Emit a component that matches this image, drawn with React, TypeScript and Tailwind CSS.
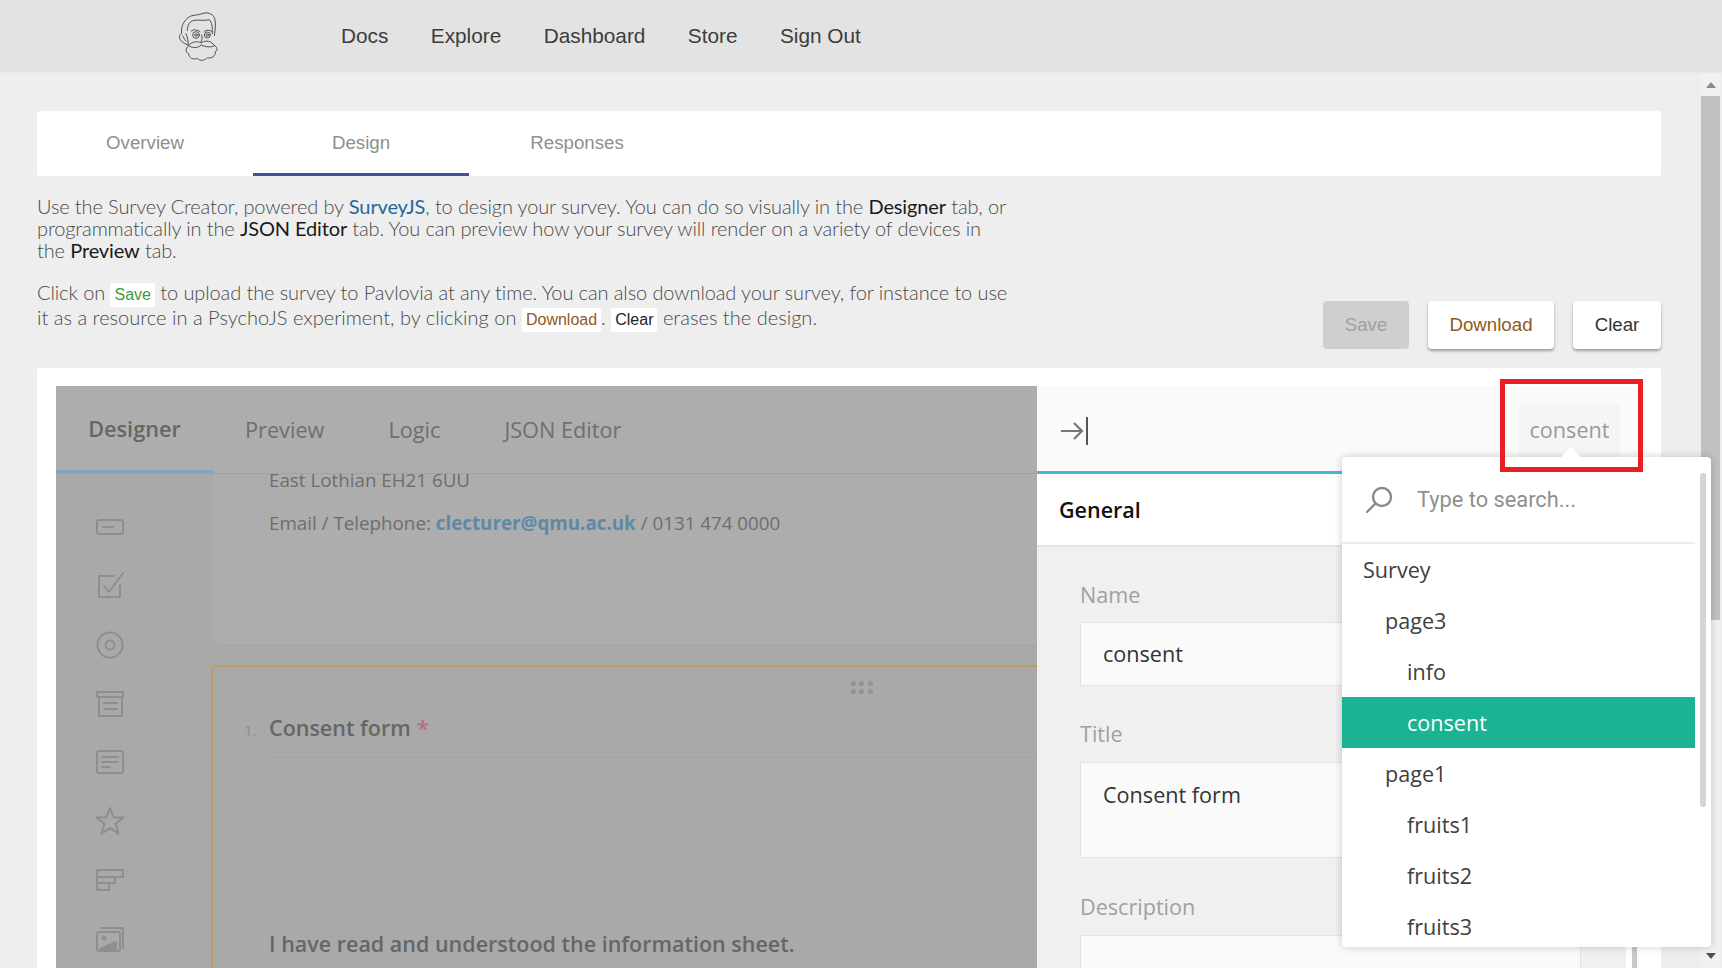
import React from "react";

const openSans = "font-['Open_Sans',sans-serif]";

function Logo() {
  return (
    <svg width="80" height="70" viewBox="0 0 240 210" fill="none" stroke="#444444" strokeWidth="2.800" strokeLinecap="round" strokeLinejoin="round" className="shrink-0">
      <path d="M65 96C62 78 70 62 84 50C96 40 112 44 126 38C142 32 158 38 164 52C168 66 166 84 163 104" />
      <path d="M82 88C82 72 90 60 102 58C116 56 134 60 148 56C156 64 158 80 157 98" />
      <path d="M65 96C58 100 56 110 62 118C68 126 76 128 84 132C86 122 82 108 78 98" />
      <path d="M68 104C72 108 72 116 78 120" />
      <circle cx="108" cy="102" r="10" />
      <circle cx="108" cy="102" r="3.500" />
      <circle cx="142" cy="102" r="9" />
      <circle cx="142" cy="102" r="3.500" />
      <path d="M94 90C102 84 112 86 120 92M132 92C140 86 148 86 156 92" />
      <path d="M125 102C128 112 126 118 122 124" />
      <path d="M85 134C92 124 110 118 124 126C136 116 154 120 164 134C150 140 136 138 124 132C112 142 98 142 85 134Z" />
      <path d="M84 136C76 142 76 154 86 158C86 170 100 178 112 172C120 182 136 178 142 170C154 174 168 164 166 152C174 148 172 138 164 134" />
    </svg>
  );
}

function Icon({ children }: { children: React.ReactNode }) {
  return (
    <div className="h-[59.3px] flex items-center justify-center">
      <svg width="30" height="30" viewBox="0 0 30 30" fill="none" stroke="#8e8e8e" strokeWidth="2" strokeLinecap="round" strokeLinejoin="round">
        {children}
      </svg>
    </div>
  );
}

function NavItem({ label }: { label: string }) {
  return <a className="text-[20.8px] text-[#3c3c3c]">{label}</a>;
}

function Chip({ label, color }: { label: string; color: string }) {
  return (
    <span className={`inline-block bg-white rounded-[2px] px-[4px] h-[24px] my-[-2px] leading-[24px] text-[16px] tracking-normal font-['Liberation_Sans',sans-serif] font-normal align-middle ${color}`}>
      {label}
    </span>
  );
}

const tree = [
  { label: "Survey", indent: "pl-[21px]" },
  { label: "page3", indent: "pl-[43px]" },
  { label: "info", indent: "pl-[65px]" },
  { label: "consent", indent: "pl-[65px]", active: true },
  { label: "page1", indent: "pl-[43px]" },
  { label: "fruits1", indent: "pl-[65px]" },
  { label: "fruits2", indent: "pl-[65px]" },
  { label: "fruits3", indent: "pl-[65px]" },
];

export default function App() {
  return (
    <div className="relative h-screen overflow-hidden bg-[#eeeeee] flex flex-col font-['Liberation_Sans',sans-serif]">
      <header className="h-[73px] shrink-0 bg-[#e3e3e3] border-b border-[#e9e9e9] flex items-center pl-[160px]">
        <Logo />
        <nav className="ml-[101px] flex gap-[42.4px]">
          <NavItem label="Docs" />
          <NavItem label="Explore" />
          <NavItem label="Dashboard" />
          <NavItem label="Store" />
          <NavItem label="Sign Out" />
        </nav>
      </header>

      <div className="flex-1 min-h-0 flex">
        <main className="flex-1 min-w-0 pl-[37px] pr-[40px] pt-[38px] flex flex-col overflow-hidden">
          <div className="h-[65px] shrink-0 bg-white rounded-[3px] flex">
            {["Overview", "Design", "Responses"].map((t, i) => (
              <div
                key={t}
                className={`w-[216px] pt-[3px] flex items-center justify-center text-[18.7px] text-[#8f8f8f] border-b-[3px] ${i === 1 ? "border-[#3f51a2]" : "border-transparent"}`}
              >
                {t}
              </div>
            ))}
          </div>

          <div className="shrink-0 flex items-end justify-between mt-[19px] mb-[19px]">
            <div className="font-['Lato',sans-serif] font-light text-[20px] text-[#4a4a4a] tracking-[-0.13px] pb-[19px]">
              <p className="leading-[22px]">
                Use the Survey Creator, powered by <span className="text-[#23689b] font-normal">SurveyJS</span>, to design your survey. You can do so visually in the <span className="text-[#1a1a1a] font-normal">Designer</span> tab, or
                <br />
                programmatically in the <span className="text-[#1a1a1a] font-normal">JSON Editor</span> tab. You can preview how your survey will render on a variety of devices in
                <br />
                the <span className="text-[#1a1a1a] font-normal">Preview</span> tab.
              </p>
              <p className="leading-[24px] mt-[19px]">
                <span className="tracking-[-0.1px]">Click on <Chip label="Save" color="text-[#3c9a3c]" /> to upload the survey to Pavlovia at any time. You can also download your survey, for instance to use</span>
                <br />
                <span className="tracking-[0.02px]">it as a resource in a PsychoJS experiment, by clicking on <Chip label="Download" color="text-[#8f5a1e]" />. <Chip label="Clear" color="text-[#222222]" /> erases the design.</span>
              </p>
            </div>
            <div className="flex gap-[19px] text-[18.7px]">
              <button className="w-[86px] h-[48px] rounded-[4px] bg-[#cfcfcf] text-[#a1a1a1]">Save</button>
              <button className="w-[126px] h-[48px] rounded-[4px] bg-white text-[#8f5a1e] shadow-[0_2px_3px_rgba(0,0,0,0.35)]">Download</button>
              <button className="w-[88px] h-[48px] rounded-[4px] bg-white text-[#333333] shadow-[0_2px_3px_rgba(0,0,0,0.35)]">Clear</button>
            </div>
          </div>

          <section className={`flex-1 min-h-0 bg-white rounded-t-[3px] pt-[18px] pl-[19px] pr-[18px] flex overflow-hidden ${openSans}`}>
            <div className="w-[981px] shrink-0 bg-[#a9a9a9] flex flex-col overflow-hidden">
              <div className="h-[88px] shrink-0 pt-[2px] bg-[#adadad] border-b border-[#a2a2a2] flex items-center relative z-10 text-[21.7px] text-[#6f6f6f]">
                <div className="w-[157px] h-[calc(100%+2px)] mt-[-2px] pt-[2px] flex items-center justify-center font-semibold text-[#666666] border-b-[3px] border-[#7fa5b8]">Designer</div>
                <span className="ml-[32px]">Preview</span>
                <span className="ml-[64px]">Logic</span>
                <span className="ml-[64px]">JSON Editor</span>
              </div>
              <div className="flex-1 min-h-0 flex">
                <div className="w-[155px] shrink-0 pt-[24px] pr-[47px] flex flex-col">
                  <Icon><rect x="2" y="8" width="26" height="14" rx="2" /><path d="M8 15h10" /></Icon>
                  <Icon><path d="M25 14v12H4V5h15" /><path d="M9 15l5 6L28 2" /></Icon>
                  <Icon><circle cx="15" cy="15" r="12.500" /><circle cx="15" cy="15" r="4.500" /></Icon>
                  <Icon><path d="M2 3h26v5H2zM4 8v19h23V8" /><path d="M9 14h13M9 20h13" /></Icon>
                  <Icon><rect x="2" y="4" width="26" height="22" rx="2" /><path d="M7 10h16M7 15h16M7 20h8" /></Icon>
                  <Icon><path d="M15 2l3.600 9.400H28.600l-8 6.400 3 10L15 22l-8.600 5.800 3-10-8-6.400h10z" /></Icon>
                  <Icon><path d="M2 5h26v7H2zM2 12h18v6H2zM2 18h12v7H2z" /></Icon>
                  <Icon><path d="M6 4h22v20" /><rect x="2" y="8" width="23" height="19" rx="2" /><circle cx="9" cy="14" r="1.500" /><path d="M5 25l16-7v7z" fill="#8e8e8e" /></Icon>
                </div>
                <div className="flex-1 min-w-0 overflow-hidden">
                  <div className="h-[171px] ml-[2px] mr-[-8px] bg-[#adadad] rounded-b-[6px] border-b border-[#a4a4a4] pl-[56px] text-[18.8px] text-[#6e6e6e] flex flex-col overflow-hidden">
                    <p className="leading-[14px] mt-[-1px]">East Lothian EH21 6UU</p>
                    <p className="leading-[25px] mt-[24px]">
                      Email / Telephone: <span className="font-bold text-[#5c8aa6]">clecturer@qmu.ac.uk</span> / 0131 474 0000
                    </p>
                  </div>
                  <div className="relative mt-[20px] mr-[-8px] h-[400px] rounded-[6px] border-2 border-[#bb9f62] pl-[31px] pt-[44px]">
                    <div className="absolute left-[638px] top-[14px] w-[22px] grid grid-cols-3 gap-[3px]">
                      {[0, 1, 2, 3, 4, 5].map((d) => (
                        <span key={d} className="w-[5px] h-[5px] rounded-[2px] bg-[#949494]" />
                      ))}
                    </div>
                    <div className="flex items-baseline">
                      <span className="text-[15px] text-[#8c8c8c] w-[25px]">1.</span>
                      <span className="text-[21.5px] font-semibold text-[#666666]">Consent form</span>
                      <span className="text-[22px] font-semibold text-[#b5707f] ml-[6px]">*</span>
                    </div>
                    <div className="ml-[25px] mt-[13px] border-t border-[#a3a3a3]" />
                    <p className="ml-[25px] mt-[170px] text-[21.5px] font-semibold text-[#666666]">I have read and understood the information sheet.</p>
                  </div>
                </div>
              </div>
            </div>

            <div className="flex-1 min-w-0 flex flex-col">
              <div className="h-[88px] shrink-0 bg-[#fafafa] border-b-[3px] border-[#4ab6dc] flex items-center justify-between pl-[24px] pr-[23px]">
                <svg width="28" height="28" viewBox="0 0 28 28" fill="none" stroke="#777777" strokeWidth="2.200" className="translate-y-[2px]">
                  <path d="M0 14h21M13 6l8 8-8 8" />
                  <path d="M26 0v28" strokeWidth="2" stroke="#555555" />
                </svg>
                <div className="w-[101px] h-[54px] translate-y-[2px] bg-[#f5f5f5] flex items-center justify-center text-[21.6px] text-[#999999]">consent</div>
              </div>
              <div className="h-[73px] shrink-0 pt-[2px] bg-white border-b-2 border-[#e4e4e4] flex items-center pl-[22px] text-[21.5px] font-semibold text-[#111111]">General</div>
              <div className="flex-1 min-h-0 flex overflow-hidden">
                <div className="flex-1 bg-[#f0f0f0] pl-[43px] pr-[45px] pt-[35px] text-[21.6px]">
                  <label className="block leading-[26px] text-[#a0a0a0]">Name</label>
                  <div className="h-[64px] mt-[14px] bg-[#fafafa] border border-[#e3e3e3] flex items-center pl-[22px] text-[#333333]">consent</div>
                  <label className="block leading-[26px] mt-[35px] text-[#a0a0a0]">Title</label>
                  <div className="h-[96px] mt-[15px] bg-[#fafafa] border border-[#e3e3e3] pl-[22px] pt-[17px] leading-[30px] text-[#333333]">Consent form</div>
                  <label className="block leading-[26px] mt-[36px] text-[#a0a0a0]">Description</label>
                  <div className="h-[80px] mt-[15px] bg-[#fafafa] border border-[#e3e3e3]" />
                </div>
                <div className="w-[17px] shrink-0 bg-white flex justify-center">
                  <div className="w-[5px] ml-[-1px] h-full bg-[#c8c8c8]" />
                </div>
              </div>
            </div>
          </section>
        </main>

        <div className="w-[19px] mr-[2px] shrink-0 bg-[#f1f1f1] flex flex-col items-center">
          <div className="h-[23px] shrink-0 flex items-center justify-center">
            <div className="w-0 h-0 border-x-[5px] border-x-transparent border-b-[6px] border-b-[#8a8a8a]" />
          </div>
          <div className="w-[19px] h-[524px] bg-[#c1c1c1]" />
          <div className="flex-1" />
          <div className="h-[24px] shrink-0 flex items-center justify-center">
            <div className="w-0 h-0 border-x-[5px] border-x-transparent border-t-[6px] border-t-[#505050]" />
          </div>
        </div>
      </div>

      {/* popup over the property panel */}
      <div className={`absolute left-[1342px] top-[457px] w-[369px] h-[490px] bg-white rounded-[4px] shadow-[0_0_8px_rgba(0,0,0,0.2)] overflow-hidden flex ${openSans}`}>
        <div className="w-[353px] shrink-0 flex flex-col">
          <div className="h-[87px] shrink-0 border-b-2 border-[#ececec] flex items-center pl-[23px] pt-[1px]">
            <svg width="28" height="28" viewBox="0 0 28 28" fill="none" stroke="#8a8a8a" strokeWidth="2.400" strokeLinecap="round">
              <circle cx="17" cy="11" r="9" />
              <path d="M10.500 17.500L2 26" />
            </svg>
            <span className="ml-[24px] font-['Roboto',sans-serif] text-[21.8px] text-[#8f8f8f]">Type to search...</span>
          </div>
          {tree.map((item) => (
            <div
              key={item.label}
              className={`h-[51px] shrink-0 pt-[2px] flex items-center text-[21.6px] ${item.indent} ${item.active ? "bg-[#1ab394] text-white" : "text-[#404040]"}`}
            >
              {item.label}
            </div>
          ))}
        </div>
        <div className="flex-1 flex justify-center pt-[16px]">
          <div className="w-[6px] h-[334px] rounded-full bg-[#d4d4d4]" />
        </div>
      </div>
      <div className="absolute left-[1561px] top-[447px] w-0 h-0 border-x-[10px] border-x-transparent border-b-[10px] border-b-white" />

      {/* annotation */}
      <div className="absolute left-[1500px] top-[379px] w-[143px] h-[93px] border-[5px] border-[#e81f27]" />
    </div>
  );
}
